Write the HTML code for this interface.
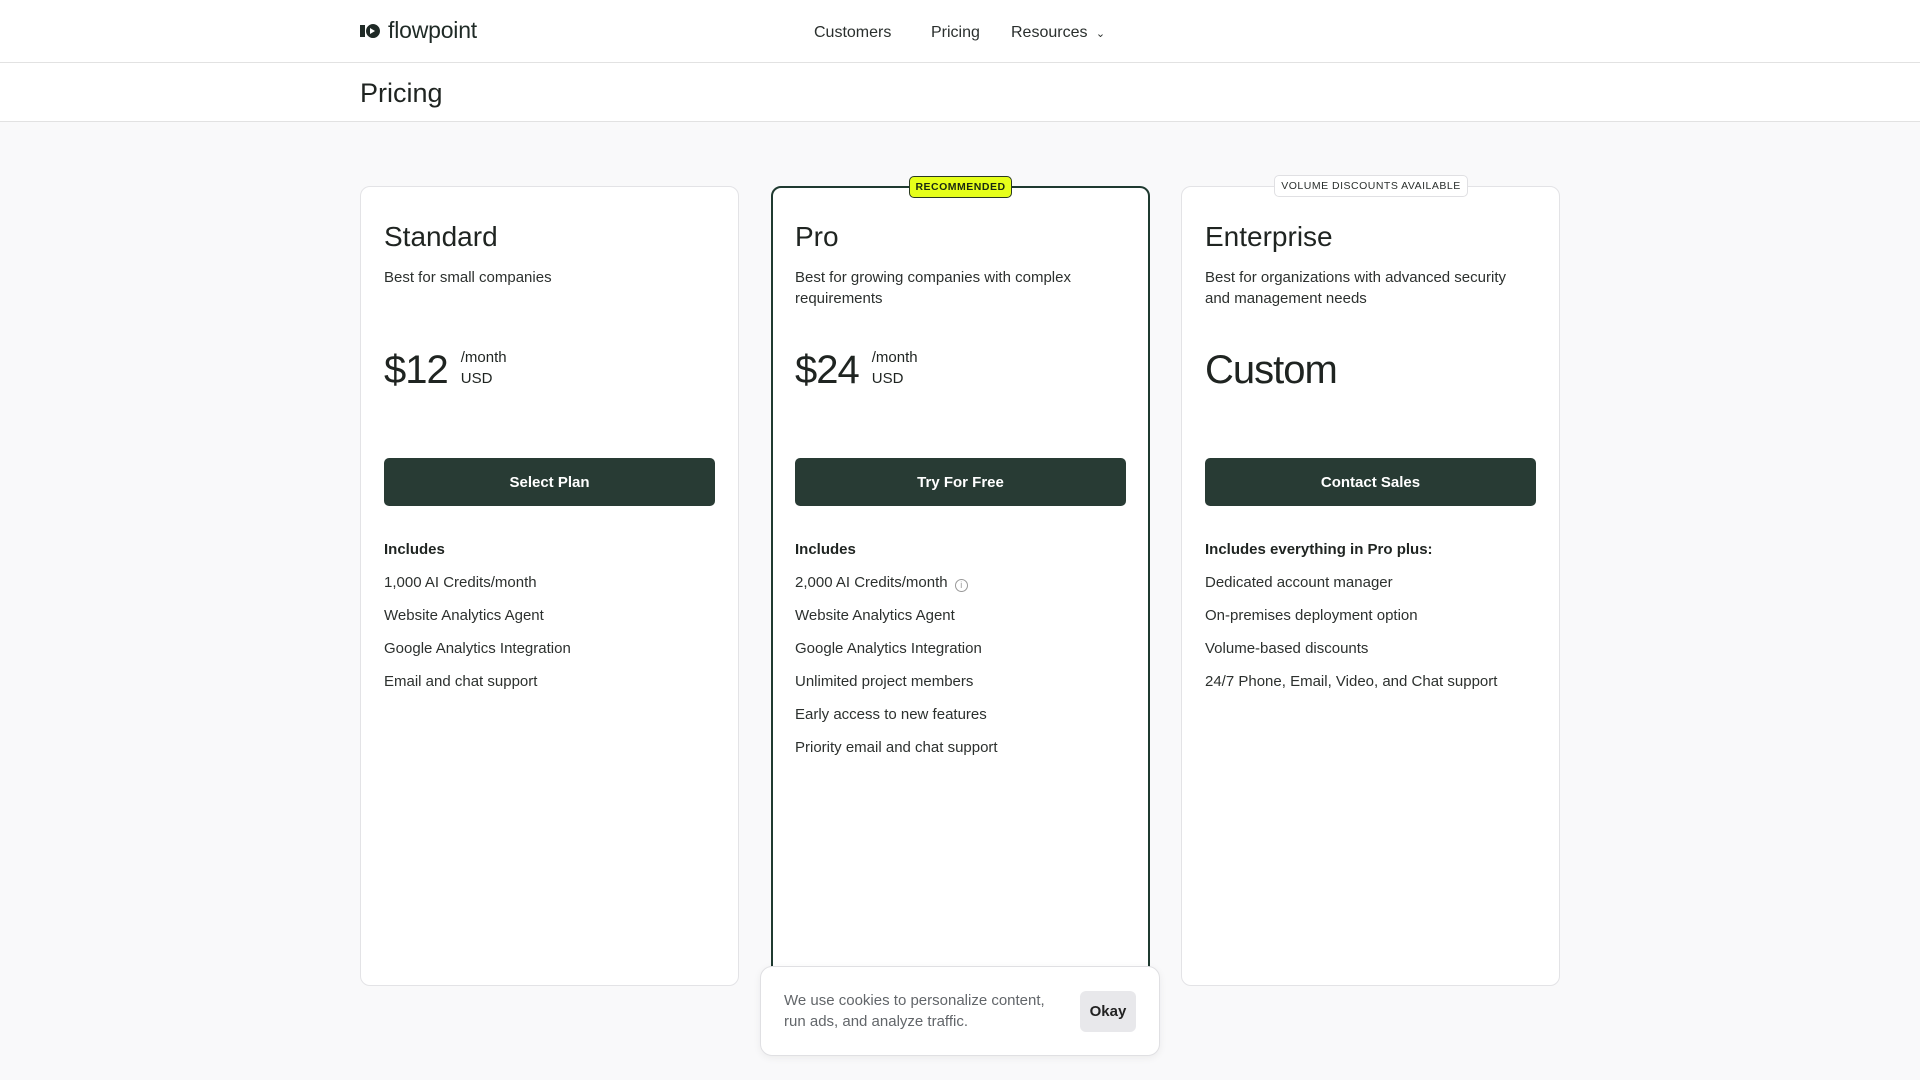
<!DOCTYPE html>
<html><head><meta charset="utf-8"><style>
*{box-sizing:border-box;margin:0;padding:0}
body{width:1920px;height:1080px;overflow:hidden;background:#f9f9fa;font-family:"Liberation Sans",sans-serif;color:#1f2421;position:relative}
.hdr{position:absolute;left:0;top:0;width:1920px;height:63px;background:#fff;border-bottom:1px solid #e2e2e2}
.logo{position:absolute;left:360px;top:17px;font-size:23px;color:#1f2a26;display:flex;align-items:center;gap:6px;letter-spacing:-0.2px}
.nav{position:absolute;top:24px;font-size:16px;color:#2a2f2d}
.sub{position:absolute;left:0;top:63px;width:1920px;height:59px;background:#fff;border-bottom:1px solid #e2e2e2}
.sub h1{position:absolute;left:360px;top:15px;font-size:27px;font-weight:normal;color:#1f2421}
.card{position:absolute;top:186px;width:379px;height:800px;background:#fff;border:1px solid #e3e3e6;border-radius:10px;padding:0 23px}
.card.pro{border:2px solid #1f3a30;padding:0 22px;height:820px}
.t{position:absolute;top:34px;font-size:28px;font-weight:normal;color:#1f2421}
.d{position:absolute;top:80px;left:23px;right:30px;font-size:15px;line-height:21px;color:#2c302e}
.p{position:absolute;top:158px;left:23px;display:flex;align-items:flex-start}
.p b{font-size:40px;font-weight:normal;letter-spacing:-1px;line-height:50px}
.p span{font-size:15px;line-height:21px;margin-left:13px;margin-top:2px}
.btn{position:absolute;top:271px;left:23px;right:23px;height:48px;background:#283b34;color:#fff;border-radius:5px;font-weight:bold;font-size:15px;display:flex;align-items:center;justify-content:center}
.inc{position:absolute;top:354px;left:23px;right:10px;font-size:15px;color:#2c302e}
.inc div{height:33px}
.inc .h{font-weight:bold;color:#1f2421}
.badge{position:absolute;top:-12px;height:22px;border-radius:5px;font-size:11px;letter-spacing:0.5px;display:flex;align-items:center;justify-content:center}
.ck{position:absolute;left:760px;top:966px;width:400px;height:90px;background:#fff;border:1px solid #e0e0e3;border-radius:12px;box-shadow:0 2px 8px rgba(0,0,0,.06)}
.ck p{position:absolute;left:23px;top:23px;font-size:15px;line-height:21px;color:#62666a}
.ok{position:absolute;left:319px;top:24px;width:56px;height:41px;background:#e8e8eb;border-radius:6px;font-weight:bold;font-size:15px;display:flex;align-items:center;justify-content:center;color:#222}
</style></head><body>
<div class="hdr">
 <div class="logo"><svg width="22" height="16" viewBox="0 0 22 16"><rect x="0" y="2" width="5" height="12" fill="#1f2a26"/><path d="M6 8a7 7 0 1 1 0 .1z" fill="#1f2a26"/><path d="M10 5l5 3-5 3z" fill="#fff"/></svg><span>flowpoint</span></div>
 <div class="nav" style="left:814px">Customers</div>
 <div class="nav" style="left:931px">Pricing</div>
 <div class="nav" style="left:1011px">Resources <span style="font-size:11px;margin-left:4px">&#8964;</span></div>
</div>
<div class="sub"><h1>Pricing</h1></div>

<div class="card" style="left:360px">
 <div class="t">Standard</div>
 <div class="d">Best for small companies</div>
 <div class="p"><b>$12</b><span>/month<br>USD</span></div>
 <div class="btn">Select Plan</div>
 <div class="inc"><div class="h">Includes</div><div>1,000 AI Credits/month</div><div>Website Analytics Agent</div><div>Google Analytics Integration</div><div>Email and chat support</div></div>
</div>

<div class="card pro" style="left:771px">
 <div class="badge" style="left:136px;width:103px;background:#e6ff1a;border:1px solid #2a3a20;color:#1a2a10;font-weight:bold;font-size:10.5px">RECOMMENDED</div>
 <div class="t" style="top:33px">Pro</div>
 <div class="d" style="top:79px;left:22px">Best for growing companies with complex requirements</div>
 <div class="p" style="top:157px;left:22px"><b>$24</b><span>/month<br>USD</span></div>
 <div class="btn" style="top:270px;left:22px;right:22px">Try For Free</div>
 <div class="inc" style="top:353px;left:22px"><div class="h">Includes</div><div>2,000 AI Credits/month <span style="display:inline-block;width:13px;height:13px;border:1px solid #999;border-radius:50%;font-size:9px;text-align:center;line-height:11px;color:#999;vertical-align:-1px;margin-left:3px">i</span></div><div>Website Analytics Agent</div><div>Google Analytics Integration</div><div>Unlimited project members</div><div>Early access to new features</div><div>Priority email and chat support</div></div>
</div>

<div class="card" style="left:1181px">
 <div class="badge" style="left:92px;width:194px;background:#fff;border:1px solid #e0e0e3;color:#2a2f2d;font-size:10.5px">VOLUME DISCOUNTS AVAILABLE</div>
 <div class="t">Enterprise</div>
 <div class="d" style="right:40px">Best for organizations with advanced security and management needs</div>
 <div class="p"><b>Custom</b></div>
 <div class="btn">Contact Sales</div>
 <div class="inc"><div class="h">Includes everything in Pro plus:</div><div>Dedicated account manager</div><div>On-premises deployment option</div><div>Volume-based discounts</div><div>24/7 Phone, Email, Video, and Chat support</div></div>
</div>

<div class="ck"><p>We use cookies to personalize content,<br>run ads, and analyze traffic.</p><div class="ok">Okay</div></div>
</body></html>
